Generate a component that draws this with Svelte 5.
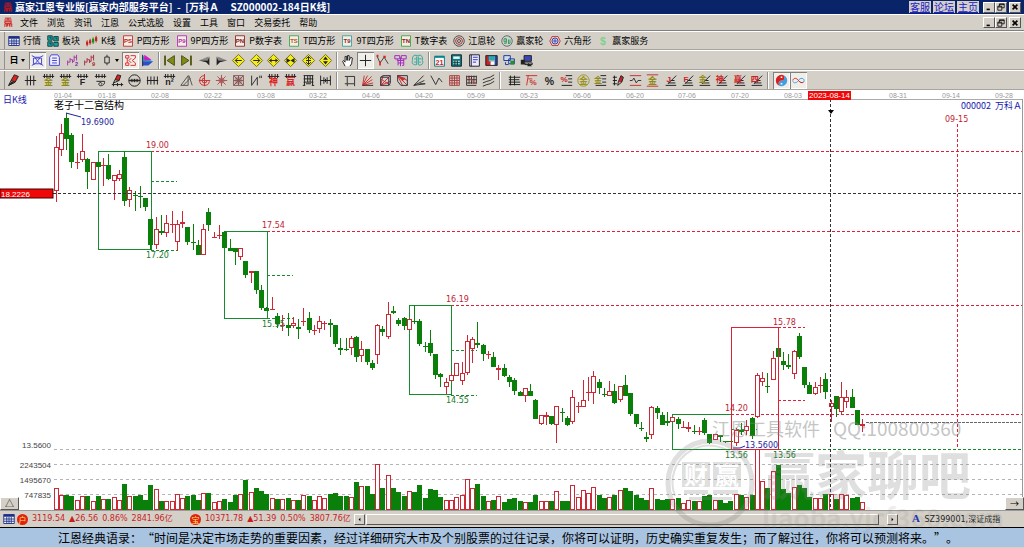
<script lang="ts">
  type Shape = [kind: 'l' | 'f' | 't', tone: string, d: string, x?: number, y?: number, size?: number];

  const menus = ['文件', '浏览', '资讯', '江恩', '公式选股', '设置', '工具', '窗口', '交易委托', '帮助'];

  const views = [
    ['sheet', '行情'], ['blocks', '板块'], ['kline', 'K线'], ['ps', 'P四方形'], ['p9', '9P四方形'],
    ['pn', 'P数字表'], ['ts', 'T四方形'], ['t9', '9T四方形'], ['tn', 'T数字表'], ['wheel', '江恩轮'],
    ['wheelWin', '赢家轮'], ['hexagon', '六角形'], ['dollar', '赢家服务']
  ];

  const comb = 'M1 3H15M3 0V5M6 0V5M10 0V5M13 0V5';
  const steps = 'M2 14H15M5 11H14M8 8H13M5 12L15 2';
  const diamond: Shape = ['f', '#f4ec1c', 'M8 0.5L15.5 8L8 15.5L0.5 8Z'];
  const diamondEdge: Shape = ['l', '#77720a', 'M8 0.5L15.5 8L8 15.5L0.5 8Z'];
  const badge = (edge: string, ink: string, label: string): Shape[] => [
    ['f', '#f6eee4', 'M2 1H14V15H2Z'],
    ['l', edge, 'M2 1H14V15H2Z'],
    ['t', ink, label, 8, 11, 8]
  ];
  const fan = (label: string, tone: string): Shape[] => [['l', '#222', steps], ['t', tone, label, 6, 10, 10]];
  const combed = (label: string, tone: string): Shape[] => [['l', '#222', comb], ['t', tone, label, 8, 14, 11]];

  const icons: Record<string, Shape[]> = {
    sheet: [['f', '#fff', 'M1 2H15V14H1Z'], ['f', '#1c2f86', 'M1 2H15V5H1Z'], ['l', '#1c2f86', 'M1 2H15V14H1ZM1 8H15M1 11H15M5 5V14M8 5V14M11 5V14']],
    blocks: [['f', '#1aa39a', 'M1 1H7V7H1ZM9 2H15V8H9ZM1 9H7V15H1ZM9 10H15V15H9Z'], ['l', '#0b3f46', 'M1 1H7V7H1ZM9 2H15V8H9ZM1 9H7V15H1ZM9 10H15V15H9ZM3 3H5V5M11 4H13V6M3 11H5V13']],
    kline: [['f', '#d22', 'M0 9H3V13H0ZM4 7H7V11H4Z'], ['f', '#189018', 'M8 5H11V10H8Z'], ['f', '#d22', 'M12 3H15V8H12Z'], ['l', '#a22', 'M1.5 7V15M5.5 5V13M13.5 1V10'], ['l', '#189018', 'M9.5 3V12']],
    ps: badge('#b33', '#b22', 'PS'),
    p9: badge('#b12fb1', '#b12fb1', 'P9'),
    pn: badge('#8a2a2a', '#8a1a1a', 'PN'),
    ts: badge('#3aa85a', '#b55a22', 'TS'),
    t9: badge('#34a5a0', '#8a2a2a', 'T9'),
    tn: badge('#3aa83a', '#8a1a1a', 'TN'),
    wheel: [['l', '#444', 'M8 1A7 7 0 1 0 8 15A7 7 0 1 0 8 1M8 6A2 2 0 1 0 8 10A2 2 0 1 0 8 6'], ['l', '#a22', 'M8 3.5A4.5 4.5 0 1 0 8 12.5A4.5 4.5 0 1 0 8 3.5']],
    wheelWin: [['l', '#567', 'M8 1A7 7 0 1 0 8 15A7 7 0 1 0 8 1'], ['l', '#2a9a5a', 'M7 5H4V9H7V5V11H4M10 6V12M12 6V11H10M12 3V4']],
    hexagon: [['l', '#c33', 'M4 2H12L15 8L12 14H4L1 8Z'], ['l', '#2b3bbb', 'M8 4A4 4 0 1 0 8 12A4 4 0 1 0 8 4M8 6.5A1.5 1.5 0 1 0 8 9.5A1.5 1.5 0 1 0 8 6.5']],
    dollar: [['t', '#7fd08a', '$', 8, 13, 14]],

    web: [['l', '#4444d8', 'M1 2L5 4H11L15 2M3 5H13V12H3ZM1 14L5 12M15 14L11 12M5 5L11 12M11 5L5 12']],
    note: [['f', '#eef', 'M4 1H12L14 4V14H2V4Z'], ['l', '#4444d8', 'M4 1H12L14 4V14H2V4ZM5 5H11M5 8H11M5 11H11']],
    zigA: [['l', '#a23aa2', 'M2 8V14M2 10H5V5M5 7H8V11M8 9H10V2M13 1V8M10 4H13'], ['t', '#7a2a9a', '2', 13, 15, 7]],
    zigB: [['l', '#a8324a', 'M2 8V14M2 10H5V5M5 7H8V11M8 9H10V2M13 1V8M10 4H13'], ['t', '#a22', '9', 13, 15, 7]],
    candle: [['l', '#222', 'M8 1V4M5 4H11V12H5ZM8 12V15']],
    pattern: [['l', '#d33', 'M2 2H6V5H2ZM2 11H6V14H2ZM4 5V11M8 2H14V5L10 8L14 11V14H8M6 8L9 5M6 8L9 11']],
    flag: [['f', '#20a8b0', 'M2 2L14 9L2 9Z'], ['f', '#d01cc0', 'M4 1L13 7L4 8Z'], ['f', '#2850c8', 'M2 9H15L9 14H2Z'], ['l', '#225', 'M2 1V15']],
    first: [['f', '#7f8a1a', 'M14 2V14L5 8Z'], ['l', '#4b520c', 'M14 2V14L5 8ZM3 2V14M2 2V14']],
    last: [['f', '#7f8a1a', 'M2 2V14L11 8Z'], ['l', '#4b520c', 'M2 2V14L11 8ZM13 2V14M14 2V14']],
    prev: [['f', '#888', 'M13 3V8H1Z'], ['f', '#222', 'M14 3V14L10 10L1 8L12 8Z']],
    next: [['f', '#888', 'M3 3V8H15Z'], ['f', '#222', 'M2 3V14L6 10L15 8L4 8Z']],
    goLeft: [diamond, diamondEdge, ['l', '#222', 'M12 8H4M7 5L4 8L7 11']],
    goRight: [diamond, diamondEdge, ['l', '#222', 'M4 8H12M9 5L12 8L9 11']],
    widen: [diamond, diamondEdge, ['l', '#222', 'M3 8H13M6 6L3 8L6 10M10 6L13 8L10 10']],
    narrow: [diamond, diamondEdge, ['f', '#222', 'M3 5L8 8L3 11ZM13 5L8 8L13 11Z']],
    taller: [diamond, diamondEdge, ['l', '#222', 'M8 3V13M5 6L8 3L11 6M5 10L8 13L11 10M5 8H11']],
    shorter: [diamond, diamondEdge, ['f', '#222', 'M5 7H11L8 3ZM5 9H11L8 13Z']],
    hand: [['f', '#fff', 'M5 15L2 9L5 9V3L7 3V8L8 2L10 3V8L12 4L14 5L13 12L11 15Z'], ['l', '#222', 'M5 15L2 9L3 8L5 10V3H7V8M8 8V2H10V8M10 8L12 4L14 5L13 12L11 15']],
    cross: [['l', '#222', 'M8 1V15M1 8H15']],
    swing: [['l', '#444', 'M1 2L5 11L10 4L15 12'], ['f', '#d22', 'M4 9H6V14H4ZM9 2H12V5H9ZM1 1H3V4H1Z']],
    stamp: [['l', '#a02ac0', 'M1 2H7V6H1ZM9 2H15V6H9ZM4 6V8H12V6M5 8V14M5 11H12M12 8V14H10M8 4V15']],
    brain: [['l', '#2aa89a', 'M8 2C3 0 1 4 2 8C0 12 4 14 7 13V3M8 2C13 0 15 4 14 8C16 12 12 15 9 13V3M4 6H6M4 10H6M10 6H13M10 10H12']],
    calendar: [['f', '#fff', 'M2 3H14V15H2Z'], ['f', '#28a0a0', 'M2 2H14V5H2Z'], ['l', '#178', 'M2 3H14V15H2Z'], ['t', '#c22', '21', 8, 13, 9]],
    calculator: [['f', '#147a7a', 'M2 1H14V15H2Z'], ['f', '#dff', 'M4 3H12V6H4Z'], ['l', '#dee', 'M4 9H12M4 12H12'], ['l', '#123', 'M2 1H14V15H2ZM6 8V14M9 8V14']],
    notebook: [['f', '#eef', 'M2 1H14V15H2Z'], ['l', '#223', 'M2 1H14V15H2ZM4 1V15'], ['l', '#33c', 'M6 4H12M6 7H12M6 10H10']],
    disk: [['f', '#c22', 'M1 2H4V14H1Z'], ['f', '#2344b8', 'M12 2H15V14H12ZM4 2H5V14H4Z'], ['f', '#29aaa0', 'M5 2H12V8H5Z'], ['f', '#c22', 'M1 9H7V14H1Z'], ['f', '#fff', 'M7 10H11V14H7Z'], ['l', '#222', 'M1 2H15V14H1Z']],
    network: [['f', '#cde', 'M1 2H9V8H1ZM7 6H14V12H7Z'], ['l', '#223a9a', 'M1 2H9V8H1ZM7 6H14V12H7ZM3 10V13H7'], ['f', '#2c8a3a', 'M9 8H14V13H9Z']],
    terminal: [['f', '#3b49b8', 'M5 2H14V9H5Z'], ['l', '#222', 'M5 2H14V9H5ZM6 11H15V13H6Z'], ['f', '#222', 'M1 7H6V13H1ZM10 11L15 15H9Z']],

    pen: [['f', '#d22', 'M9 1L14 3L10 10L5 8Z'], ['l', '#222', 'M9 1L14 3L10 10L5 8ZM5 8L2 14L10 10'], ['f', '#222', 'M1 15L6 9L9 11Z']],
    tally: [['l', '#222', 'M1 8H15M4 2V14M8 2V14M12 2V14']],
    goldComb: combed('金', '#8f8a14'),
    fComb: combed('F', '#222'),
    spiral: [['l', '#222', comb], ['l', '#222', 'M3 9H13C14 15 5 16 6 12C7 9 11 11 9 13']],
    penRuler: [['f', '#d22', 'M8 1L12 2L10 8L5 7Z'], ['l', '#222', 'M8 1L12 2L10 8L5 7ZM5 7L3 11L10 8M1 13H15M3 11V15M8 11V15M13 11V15']],
    ringTicks: [['l', '#222', 'M8 1A7 7 0 1 0 8 15A7 7 0 1 0 8 1M1 8H15M4 6V10M6 6V10M8 6V10M10 6V10M12 6V10']],
    tallyWide: [['l', '#222', 'M1 8H15M2 3V13M6 3V13M10 3V13M14 3V13']],
    nComb: combed('n²', '#222'),
    setSquare: [['l', '#555', 'M1 14L10 2V14ZM11 2L15 14M4 14L13 5']],
    ringCross: [['l', '#c33', 'M8 2A6 6 0 1 0 14 9M8 5A3 3 0 1 0 11 8M8 0V15M1 8H15']],
    star: [['l', '#a55', 'M8 1V15M1 8H15M3 3L13 13M13 3L3 13M8 4L12 8L8 12L4 8Z']],
    starBox: [['l', '#855', 'M2 2H14V14H2ZM8 2V14M2 8H14M2 2L14 14M14 2L2 14M5 5H11V11H5Z']],
    angle: [['l', '#333', 'M2 2V14L9 4V14M12 2V5M14 2V5']],
    shenComb: combed('神', '#d22'),
    winComb: combed('赢', '#d22'),
    gridComb: [['l', '#222', 'M2 2H14M2 6H14M2 10H14M3 2V14M7 2V10M10 2V10M13 2V14M1 14H4M12 14H15M5 12H11']],
    span: [['l', '#222', 'M2 2V14M6 4V12M10 4V12M14 2V14M2 8H14M8 6V10']],

    frame: [['l', '#333', 'M4 3H13V12H4ZM1 3H4M4 12V15M1 12H4M13 12V15']],
    fanRed: [['l', '#c33', 'M2 14L4 2M2 14L8 2M2 14L13 3M2 14L14 7M2 14L15 11'], ['l', '#333', 'M2 14H15']],
    fanBox: [['l', '#c33', 'M2 14L5 2M2 14L14 2M2 14L14 9M14 14L2 6'], ['l', '#334', 'M2 4H12V14H2ZM2 4L5 2H14V11L12 14']],
    fanBoxDown: [['f', '#b33', 'M2 2L12 5L8 9Z'], ['l', '#c33', 'M2 2L14 8M2 2L8 14M2 2L14 14'], ['l', '#334', 'M2 2H14V14H6L2 9Z']],
    fanBlack: [['l', '#333', 'M1 14L13 2M1 14L14 8M1 14L15 12H8']],
    vee: [['l', '#333', 'M1 2L7 13L11 5L15 10']],
    gridRed: [['l', '#a44', 'M2 2H14V14H2ZM5 2V14M8 2V14M11 2V14M2 5H14M2 8H14M2 11H14']],
    gridDark: [['l', '#433', 'M2 2V14H14M5 2V12M8 2V12M11 2V12M14 2V12M2 3H14M2 7H14M2 11H14'], ['l', '#c44', 'M3 3L13 12']],
    parallel: [['l', '#333', 'M1 7L6 5L10 4L15 1M1 11L6 9L10 8L15 5M1 15L6 13L10 12L15 9']],

    ladder: [['l', '#222', 'M3 2V14M8 2V14M1 4H15M1 7H8M1 10H15M1 13H15M8 7H14']],
    percentTop: [['l', '#c33', 'M1 2H15M4 2L2 14M4 6H9'], ['t', '#c33', '%', 10, 14, 10]],
    percent: [['t', '#222', '%', 8, 13, 13]],
    percentRows: [['l', '#222', 'M7 2H15M10 6H15M10 10H15M2 14H15'], ['t', '#c22', '%', 5, 10, 10]],
    goldRing: [['l', '#9a9520', 'M8 1A7 7 0 1 0 8 15A7 7 0 1 0 8 1'], ['t', '#9a9520', '金', 8, 12, 11]],
    goldRows: [['l', '#222', 'M8 2H15M10 6H15M10 10H15M2 14H15'], ['t', '#8f8a14', '金', 5, 11, 10]],
    penRows: [['l', '#222', 'M3 2V14M1 4H6M1 8H6M1 12H6'], ['f', '#c22', 'M11 2L14 4L12 10H8Z'], ['l', '#222', 'M11 2L14 4L12 10L7 14L8 9Z']],
    waveRows: [['l', '#c33', 'M1 2H15M1 14H15'], ['l', '#333', 'M1 8H4L6 5L9 11L11 8H15']],
    goldLines: [['l', '#c33', 'M1 1H15M1 15H15'], ['t', '#8f8a14', '金', 8, 12, 11]],
    fanJ: fan('J', '#c22'),
    fanF: fan('F', '#c22'),
    fanGold: fan('金', '#8f8a14'),
    fanShen: fan('神', '#c22'),
    fanWin: fan('赢', '#c22'),
    fanFour: fan('四', '#c22'),
    taiji: [['f', '#3f9fe0', 'M8 1A7 7 0 0 1 8 15A3.5 3.5 0 0 1 8 8A3.5 3.5 0 0 0 8 1'], ['f', '#d81e1e', 'M8 1A7 7 0 0 0 8 15A3.5 3.5 0 0 1 8 8A3.5 3.5 0 0 0 8 1'], ['f', '#fff', 'M7 3H9V5H7ZM7 11H9V13H7Z']],
    infinity: [['l', '#3f9fe0', 'M8 8C10 4 15 5 15 8C15 11 11 12 8 8'], ['l', '#3f9fe0', 'M8 8C6 11 2 12 1 9'], ['l', '#d22', 'M1 8C2 4 6 5 8 8C10 11 12 11 14 10']]
  };

  const step = [
    { cls: 'period', names: ['web', 'note', 'zigA', 'zigB'] },
    { cls: 'overlay', names: ['pattern', 'flag'] },
    { cls: 'move', names: ['first', 'last', 'prev', 'next', 'goLeft', 'goRight', 'widen', 'narrow', 'taller', 'shorter'] },
    { cls: 'cursor', names: ['hand', 'cross', 'swing', 'stamp', 'brain'] },
    { cls: 'desk', names: ['calendar', 'calculator', 'notebook', 'disk', 'network', 'terminal'] }
  ];
  const drawing = [
    { cls: 'draw', names: ['pen', 'tally', 'goldComb', 'goldComb', 'fComb', 'spiral', 'penRuler', 'ringTicks', 'tallyWide', 'nComb', 'setSquare', 'ringCross', 'star', 'starBox', 'angle', 'shenComb', 'winComb', 'gridComb', 'span'] },
    { cls: 'fans', names: ['frame', 'fanRed', 'fanBox', 'fanBoxDown', 'fanBlack', 'vee', 'gridRed', 'gridDark', 'parallel'] },
    { cls: 'ratios', names: ['ladder', 'percentTop', 'percent', 'percentRows', 'goldRing', 'goldRows', 'penRows', 'waveRows', 'goldLines', 'fanJ', 'fanF', 'fanGold', 'fanShen', 'fanWin', 'fanFour'] },
    { cls: 'extra', names: ['taiji', 'infinity'] }
  ];
  const pressed = ['web', 'pattern', 'cross', 'taiji', 'infinity'];

  // colour, high, body top, body bottom, low, top of the volume bar
  const bars = `r 136 147 191 202 488|r 124 133 150 156 495|g 113 118 139 150 495|g 133 135 162 168 496|r 153 162 162 169 500|r 134 151 160 162 496|g 158 159 172 189 496|r 162 162 180 180 501|g 162 162 167 167 496|r 158 165 165 186 499
g 154 165 179 180 499|r 175 175 181 200 497|r 170 174 179 181 500|g 151 157 201 206 484|r 187 190 200 207 496|g 191 195 195 211 496|g 186 196 196 208 495|g 198 198 207 211 500|g 219 219 245 250 485|r 217 229 245 249 489
g 215 231 233 235 501|r 215 223 233 237 501|r 211 224 224 233 501|r 220 224 242 251 494|r 211 222 224 228 498|g 227 227 242 245 496|g 224 242 242 250 495|g 240 245 255 255 500|r 224 229 255 255 493|g 208 212 225 231 493
r 232 237 237 238 502|r 225 235 235 239 501|g 231 232 248 248 499|g 239 248 251 251 502|g 248 248 252 265 495|r 248 248 257 260 494|g 261 261 275 278 480|r 271 271 273 283 492|g 271 271 290 294 488|g 285 290 308 310 491
g 307 308 311 311 494|r 297 309 309 309 498|g 313 316 324 328 499|r 315 325 325 331 499|g 313 325 328 336 498|r 317 323 326 328 500|g 319 327 329 339 500|r 308 321 321 326 495|g 312 318 330 333 496|r 325 330 330 335 500
r 316 321 329 333 496|r 321 323 323 330 498|g 319 323 325 337 494|g 325 325 344 347 493|g 338 348 350 355 496|g 338 349 349 351 496|r 336 338 348 355 497|g 336 337 357 362 482|r 341 349 356 362 486|g 349 349 362 365 486
g 360 363 368 370 494|r 324 325 355 364 464|g 326 329 332 336 488|r 302 314 337 339 475|g 306 311 312 314 488|g 318 320 324 326 492|g 317 318 326 330 496|r 319 319 330 330 491|g 305 321 321 324 492|g 319 321 344 346 485
g 342 346 346 352 498|g 330 343 353 356 489|g 354 354 375 379 490|g 373 374 377 387 497|r 378 382 387 394 500|r 373 375 381 381 500|r 363 363 376 376 497|r 362 373 381 385 495|r 335 341 373 375 479|r 337 339 349 363 488
g 322 343 344 348 484|g 344 345 354 361 496|r 351 354 354 359 501|g 352 357 367 367 500|r 365 368 370 380 496|g 364 368 376 377 502|g 375 377 382 387 499|g 378 380 391 395 498|g 391 392 396 396 501|r 388 388 396 402 502
g 384 391 396 396 502|g 399 400 419 419 495|r 415 415 424 425 501|r 412 415 417 425 501|g 416 416 424 425 501|r 406 406 425 443 491|g 408 412 412 422 501|g 416 418 425 426 501|r 390 397 422 424 485|r 402 406 406 413 497
r 380 400 407 407 490|r 377 392 392 401 493|r 371 376 393 404 487|g 379 382 388 394 495|g 388 394 394 397 498|r 381 391 396 396 497|g 384 391 403 404 495|r 386 386 400 402 490|g 375 385 396 396 488|g 393 393 414 416 491
g 414 414 424 427 495|g 422 428 428 431 498|g 432 437 438 442 500|r 406 407 435 439 488|g 406 408 413 419 499|g 412 415 425 425 500|g 412 421 423 426 499|r 417 417 422 422 499|g 417 419 424 429 498|r 421 427 427 428 503
r 422 427 428 432 500|g 425 431 431 434 501|r 427 431 431 435 501|g 418 420 433 435 496|g 434 434 443 444 495|r 434 434 440 440 500|g 435 435 437 442 500|g 441 441 441 443 503|g 441 441 441 441 501|r 428 430 443 446 494
g 423 430 432 435 495|r 420 426 431 435 497|g 417 418 436 439 495|r 373 375 417 418 449|r 372 378 382 386 481|g 373 386 386 393 488|r 351 358 380 380 471|g 328 348 357 357 465|g 352 361 365 370 489|g 354 365 367 369 493
r 350 351 374 379 487|g 333 336 357 359 485|g 367 367 385 388 488|g 382 385 394 394 497|r 382 387 394 395 498|r 377 385 385 393 498|g 373 379 392 399 494|r 400 403 407 422 494|g 396 396 409 417 499|r 382 397 412 414 494
r 390 397 402 408 495|g 389 397 408 408 498|g 410 410 425 425 497|r 419 424 426 432 502`
    .split(/[|\n]/)
    .map((row, i) => {
      const [tone, ...v] = row.trim().split(' ');
      const [high, top, bottom, low, volume] = v.map(Number);
      return { up: tone === 'r', x: Math.round(55.6 + i * 5.272), high, top, bottom, low, volume };
    });

  const dates: [string, number][] = [
    ['01-04', 54], ['01-18', 98], ['02-08', 151], ['02-22', 204], ['03-08', 257], ['03-22', 309], ['04-06', 362],
    ['04-20', 415], ['05-09', 467], ['05-23', 520], ['06-06', 573], ['06-20', 626], ['07-06', 678], ['07-20', 731],
    ['08-03', 784], ['08-31', 889], ['09-14', 942], ['09-28', 995]
  ];
  const marks: [string, number, number, string][] = [
    ['19.00', 146, 148, 'red'], ['17.20', 146, 258, 'green'], ['17.54', 262, 228, 'red'], ['15.95', 262, 327, 'green'],
    ['16.19', 446, 302, 'red'], ['14.55', 446, 403, 'green'], ['14.20', 725, 411, 'red'], ['15.78', 773, 325, 'red'],
    ['13.56', 725, 458, 'green'], ['13.56', 773, 458, 'green'], ['19.6900', 81, 125, 'blue'], ['13.5600', 745, 448, 'blue'],
    ['09-15', 945, 122, 'red']
  ];
  const scale: [string, number][] = [['13.5600', 448], ['2243504', 468], ['1495670', 483], ['747835', 498]];
</script>

{#snippet icon(name: string)}
  <svg class="icon" viewBox="0 0 16 16" aria-hidden="true">
    {#each icons[name] as [kind, tone, d, x, y, size]}
      {#if kind === 't'}
        <text {x} {y} font-size={size} fill={tone} text-anchor="middle">{d}</text>
      {:else}
        <path {d} fill={kind === 'f' ? tone : 'none'} stroke={kind === 'l' ? tone : 'none'} />
      {/if}
    {/each}
  </svg>
{/snippet}

{#snippet tools(groups: { cls: string; names: string[] }[])}
  {#each groups as group}
    <div class="group {group.cls}">
      {#each group.names as name}
        <button type="button" class="tool" class:pressed={pressed.includes(name)} aria-label={name}>{@render icon(name)}</button>
      {/each}
    </div>
  {/each}
{/snippet}

{#snippet windowButtons()}
  <div class="window-buttons">
    <button type="button" class="bevel" aria-label="minimize"><svg viewBox="0 0 10 10"><path d="M2 8H6" stroke-width="2" /></svg></button>
    <button type="button" class="bevel" aria-label="restore"><svg viewBox="0 0 10 10"><path d="M3 4V1H9V6H6M3 2H9M1 4H6V9H1ZM1 5H6" /></svg></button>
    <button type="button" class="bevel close" aria-label="close"><svg viewBox="0 0 10 10"><path d="M2 2L8 8M8 2L2 8" stroke-width="2" /></svg></button>
  </div>
{/snippet}

{#snippet seal()}
  <svg class="seal" viewBox="0 0 16 16" aria-hidden="true">
    <path d="M3 1H13M2 4H14M3 6H13V9H3ZM3 10H6V15M3 10V15M7 10H10V14M7 10V14M11 10H14V15M11 10V15M8 1V4" />
  </svg>
{/snippet}

<div class="app" lang="zh-CN">
  <header class="title-bar">
    {@render seal()}
    <h1>赢家江恩专业版[赢家内部服务平台]&nbsp; -&nbsp; [万科Ａ&nbsp;&nbsp;&nbsp;&nbsp; SZ000002-184日K线]</h1>
    <nav class="links">
      <a href="#service">客服</a>
      <a href="#forum">论坛</a>
      <a href="#home">主页</a>
    </nav>
    {@render windowButtons()}
  </header>

  <div class="menu-bar">
    {@render seal()}
    <nav class="menus">
      {#each menus as menu}
        <button type="button">{menu}</button>
      {/each}
    </nav>
    {@render windowButtons()}
  </div>

  <div class="toolbar views">
    {#each views as [name, label]}
      <button type="button" class="view">{@render icon(name)}{label}</button>
    {/each}
  </div>

  <div class="toolbar">
    <button type="button" class="drop">日<i></i></button>
    {@render tools(step.slice(0, 1))}
    <button type="button" class="drop" aria-label="candle">{@render icon('candle')}<i></i></button>
    {@render tools(step.slice(1))}
  </div>

  <div class="toolbar">
    {@render tools(drawing)}
  </div>

  <main class="chart">
    <svg class="plot" viewBox="0 90 1024 421">
      <g class="ruler">
        <path d="M54 99.5H1022" />
        {#each dates as [label, x]}
          <text {x} y="98">{label}</text>
        {/each}
      </g>

      <g class="lines">
        <path class="grid" d="M54 449.5H673M54 464.5H1022M54 479.5H1022M54 494.5H1022" />
        <path class="dash red" d="M151 151.5H1022M267 231.5H1022M451 305.5H1022M731 414.5H1022M778 327.5H805M778 400.5H805" />
        <path class="dash red" d="M957.5 124V449" />
        <path class="dash green" d="M151 181.5H177M151 250.5H177M267 275.5H293M267 318.5H293M451 350.5H477M451 395.5H477M731 429.5H757M778 449.5H1022" />
        <path class="green" d="M98.5 151.5H151.5V249.5H98.5ZM224.5 231.5H267.5V318.5H224.5ZM409.5 305.5H451.5V394.5H409.5ZM731 414.5H672.5V449.5H731" />
        <path class="last" d="M866 422.5H1022" />
      </g>

      <g class="bars">
        {#each bars as bar}
          <g class={bar.up ? 'up' : 'down'}>
            <path d="M{bar.x + 0.5} {bar.high}V{bar.low}" />
            {#if bar.bottom === bar.top}
              <path d="M{bar.x - 2} {bar.top + 0.5}H{bar.x + 3}" />
            {:else}
              <rect x={bar.x - 1.5} y={bar.top + 0.5} width="4" height={Math.max(bar.bottom - bar.top - 1, 1)} />
            {/if}
            <rect x={bar.x - 1.5} y={bar.volume + 0.5} width="4" height={509 - bar.volume} />
          </g>
        {/each}
      </g>

      <g class="lines">
        <path class="red" d="M731.5 327.5H778.5V449.5H731.5Z" />
        <path class="leader" d="M66 113L81 117M733 448L740 448L745 446" />
        <path class="cross" d="M53 193.5H1022M830.5 99V510" />
        <path class="floor" d="M0 510.5H1024M1022.5 99V510" />
      </g>
      <path d="M828 110H834L831 114Z" />

      {#each marks as [label, x, y, tone]}
        <text class="mark {tone}" {x} {y}>{label}</text>
      {/each}
      {#each scale as [label, y]}
        <text class="scale" x="51" {y}>{label}</text>
      {/each}

      <rect class="price-tag" x="0" y="189" width="53" height="9" />
      <text class="price" x="1" y="197">18.2226</text>
      <rect class="date-tag" x="808" y="91" width="43" height="9" />
      <text class="date" x="809" y="98">2023-08-14</text>
      <text class="caption blue" x="3" y="103">日K线</text>
      <text class="caption heading" x="54" y="109">老子十二宫结构</text>
      <text class="caption blue" x="1022" y="109" text-anchor="end">000002&nbsp; 万科Ａ</text>
    </svg>
    <button type="button" class="bevel corner left">△</button>
    <button type="button" class="bevel corner right">→</button>
  </main>

  <footer class="status">
    {@render icon('sheet')}
    <span class="coin">户</span>
    <div class="quote">
      <span>3119.54</span><span>▲26.56</span><span>0.86%</span><span>2841.96亿</span>
    </div>
    <span class="coin">宝</span>
    <div class="quote">
      <span>10371.78</span><span>▲51.39</span><span>0.50%</span><span>3807.76亿</span>
    </div>
    <div class="scroll">
      <button type="button" class="bevel" aria-label="scroll left"><svg viewBox="0 0 10 10"><path d="M6 3V7L4 5Z" /></svg></button>
      <div class="thumb bevel"></div>
      <button type="button" class="bevel" aria-label="scroll right"><svg viewBox="0 0 10 10"><path d="M4 3V7L6 5Z" /></svg></button>
    </div>
    <div class="index"><b>A</b> SZ399001,深证成指</div>
  </footer>

  <p class="quotation">江恩经典语录：“时间是决定市场走势的重要因素，经过详细研究大市及个别股票的过往记录，你将可以证明，历史确实重复发生；而了解过往，你将可以预测将来。”。</p>

  <svg class="watermark" viewBox="0 0 1024 548" aria-hidden="true">
    <text x="712" y="436" font-size="18">江恩工具软件</text>
    <text x="833" y="436" font-size="19">QQ:100800360</text>
    <g class="faint">
      <text x="763" y="495" font-size="52" font-weight="700">赢家聊吧</text>
      <text class="site" x="762" y="528" font-size="26" font-weight="700">liaoba.yjcf360.com</text>
      <circle class="ring" cx="710" cy="483" r="42" />
      <path class="ring thin" d="M675 496A37 37 0 0 1 738 459" />
      <path d="M682 462H710V487H682ZM713 462H741V487H713ZM684 490H708V494H684ZM713 490H738V494H713ZM689 497H732V500H689Z" />
      <text class="knock" x="684" y="484" font-size="24" font-weight="700">财</text>
      <text class="knock" x="715" y="484" font-size="24" font-weight="700">赢</text>
    </g>
  </svg>
</div>

<style>
  :global(body) {
    margin: 0;
    background: #d4d0c8;
  }
  .app {
    position: relative;
    display: flex;
    flex-direction: column;
    overflow: hidden;
    background: #d4d0c8;
    color: #000;
    font-family: 'Noto Sans CJK SC', 'Liberation Sans', sans-serif;
    font-size: 9px;
    line-height: 12px;
  }
  button {
    box-sizing: border-box;
    padding: 0;
    border: 0;
    background: none;
    color: inherit;
    font: inherit;
    white-space: nowrap;
  }
  .bevel {
    background: #d4d0c8;
    border: 1px solid;
    border-color: #fff #555 #555 #fff;
  }

  .title-bar, .menu-bar {
    display: flex;
    align-items: center;
    box-sizing: border-box;
    padding: 0 3px;
  }
  .title-bar { height: 14px; background: #0a246a; color: #fff; }
  .menu-bar { height: 17px; border-top: 1px solid #fff; border-bottom: 1px solid #808080; }
  .title-bar h1 { flex: 1; margin: 0 0 0 2px; font-size: 10px; line-height: 14px; font-weight: 700; white-space: nowrap; }
  .seal { width: 10px; height: 11px; fill: none; stroke: #d01818; stroke-width: 1.5; }
  .links { display: flex; gap: 2px; margin-right: 4px; }
  .links a { width: 22px; background: #d4d0c8; color: #2020c8; font-size: 10px; text-align: center; }
  .menus { display: flex; flex: 1; gap: 9px; margin-left: 7px; }
  .window-buttons { display: flex; }
  .window-buttons button { width: 12px; height: 11px; line-height: 0; }
  .window-buttons .close { margin-left: 2px; }
  .window-buttons svg { width: 8px; height: 8px; fill: none; stroke: #000; }

  .toolbar {
    display: flex;
    align-items: center;
    box-sizing: border-box;
    height: 20px;
    padding-left: 5px;
    border-top: 1px solid #fff;
    border-bottom: 1px solid #a8a59e;
    box-shadow: inset 4px 0 #d4d0c8, inset 5px 0 #909090;
  }
  .views { height: 19px; gap: 6px; padding-left: 8px; }
  .view { display: flex; align-items: center; gap: 3px; }
  .icon { display: block; flex: none; width: 12px; height: 12px; stroke-width: 1.2; }
  .icon text { font-family: 'Liberation Sans', 'Noto Sans CJK SC', sans-serif; font-weight: 700; }
  .group { display: flex; justify-content: space-between; }
  .tool { display: flex; align-items: center; justify-content: center; width: 17px; height: 17px; }
  .tool .icon { width: 13px; height: 13px; overflow: visible; }
  .tool.pressed { background: #f0eee8; box-shadow: inset 1px 1px #808080, inset -1px -1px #fff; }
  .drop { display: flex; align-items: center; justify-content: center; gap: 2px; width: 24px; font-weight: 700; }
  .drop i { border: 2px solid transparent; border-top: 3px solid #000; border-bottom: 0; }
  .period { width: 69px; }
  .overlay { width: 34px; }
  .move, .cursor, .desk, .fans, .ratios, .extra { margin-left: 2px; padding-left: 2px; border-left: 1px solid #909090; box-shadow: inset 1px 0 #fff; }
  .move { width: 173px; }
  .cursor { width: 87px; }
  .desk { width: 104px; }
  .draw { width: 329px; }
  .fans { width: 155px; padding-left: 5px; }
  .ratios { width: 259px; padding-left: 6px; }
  .extra { width: 34px; padding-left: 5px; }

  .chart { position: relative; background: #fff; }
  .plot { display: block; width: 100%; height: auto; }
  .ruler text { fill: #999; font: 7px 'Liberation Sans', sans-serif; }
  .ruler path { stroke: #aaa; }
  .lines path { fill: none; stroke-width: 1; shape-rendering: crispEdges; }
  .lines .dash { stroke-dasharray: 3 2; }
  .lines .red { stroke: #e02038; }
  .lines .green { stroke: #188a30; }
  .lines .grid { stroke: #b4b4b4; stroke-dasharray: 3 3; }
  .lines .last { stroke: #666; stroke-dasharray: 3 1; }
  .lines .leader { stroke: #2222a0; shape-rendering: auto; }
  .lines .cross { stroke: #333; stroke-dasharray: 3 2; }
  .lines .floor { stroke: #999; }
  .bars { shape-rendering: crispEdges; }
  .bars .up { fill: #fff; stroke: #cc2836; }
  .bars .down { fill: #0a800a; stroke: #0a800a; }
  .mark { font: 8px 'DejaVu Sans', sans-serif; }
  .mark.red { fill: #c01c34; }
  .mark.green { fill: #1a7a2c; }
  .mark.blue { fill: #1c1ca0; }
  .scale { fill: #444; font: 8px 'Liberation Sans', sans-serif; text-anchor: end; }
  .price-tag, .date-tag { fill: #f00808; }
  .price-tag { stroke: #400; stroke-width: 1; }
  .price, .date { fill: #fff; font: 8px 'Liberation Sans', sans-serif; }
  .caption { font-size: 9px; }
  .caption.blue { fill: #1818b0; }
  .caption.heading { font-size: 10px; }
  .corner { position: absolute; bottom: 1px; width: 19px; height: 13px; line-height: 10px; }
  .corner.left { left: 0; }
  .corner.right { right: 0; }

  .status {
    display: flex;
    align-items: center;
    box-sizing: border-box;
    height: 17px;
    padding-left: 3px;
    border-bottom: 1px solid #000;
    white-space: nowrap;
  }
  .coin { width: 11px; height: 11px; margin: 0 4px 0 2px; border-radius: 50%; background: #e02010; color: #ffe060; font-size: 8px; line-height: 11px; text-align: center; }
  .quote { display: flex; flex: none; gap: 4px; box-sizing: border-box; width: 158px; overflow: hidden; color: #c81e1e; font-family: 'DejaVu Sans', 'Noto Sans CJK SC', sans-serif; font-size: 8px; }
  .quote + .coin { margin-left: 0; }
  .quote + .scroll { margin-left: -9px; }
  .scroll { display: flex; flex: 1; gap: 1px; background: #d4d0c8; }
  .scroll button { width: 11px; height: 11px; line-height: 0; }
  .scroll svg { width: 9px; height: 9px; }
  .scroll .thumb { flex: 1; margin-right: 7px; }
  .index { width: 112px; margin-left: 14px; color: #222; font-family: 'DejaVu Sans', 'Noto Sans CJK SC', sans-serif; font-size: 8px; }
  .index b { margin-right: 2px; color: #2030b0; font: 700 11px 'Liberation Serif', serif; }

  .quotation {
    margin: 0;
    padding-left: 58px;
    border-bottom: 1px solid #d4d0c8;
    background: #a8c4e0;
    font-size: 12px;
    line-height: 19px;
    text-spacing-trim: space-all;
    white-space: nowrap;
  }

  .watermark { position: absolute; top: 0; left: 0; width: 100%; height: auto; fill: #808080; opacity: 0.45; pointer-events: none; }
  .faint { opacity: 0.55; }
  .faint .site { opacity: 0.5; }
  .faint .ring { fill: none; stroke: #808080; stroke-width: 5; }
  .faint .thin { stroke-width: 2; }
  .faint .knock { fill: #fff; }
</style>
